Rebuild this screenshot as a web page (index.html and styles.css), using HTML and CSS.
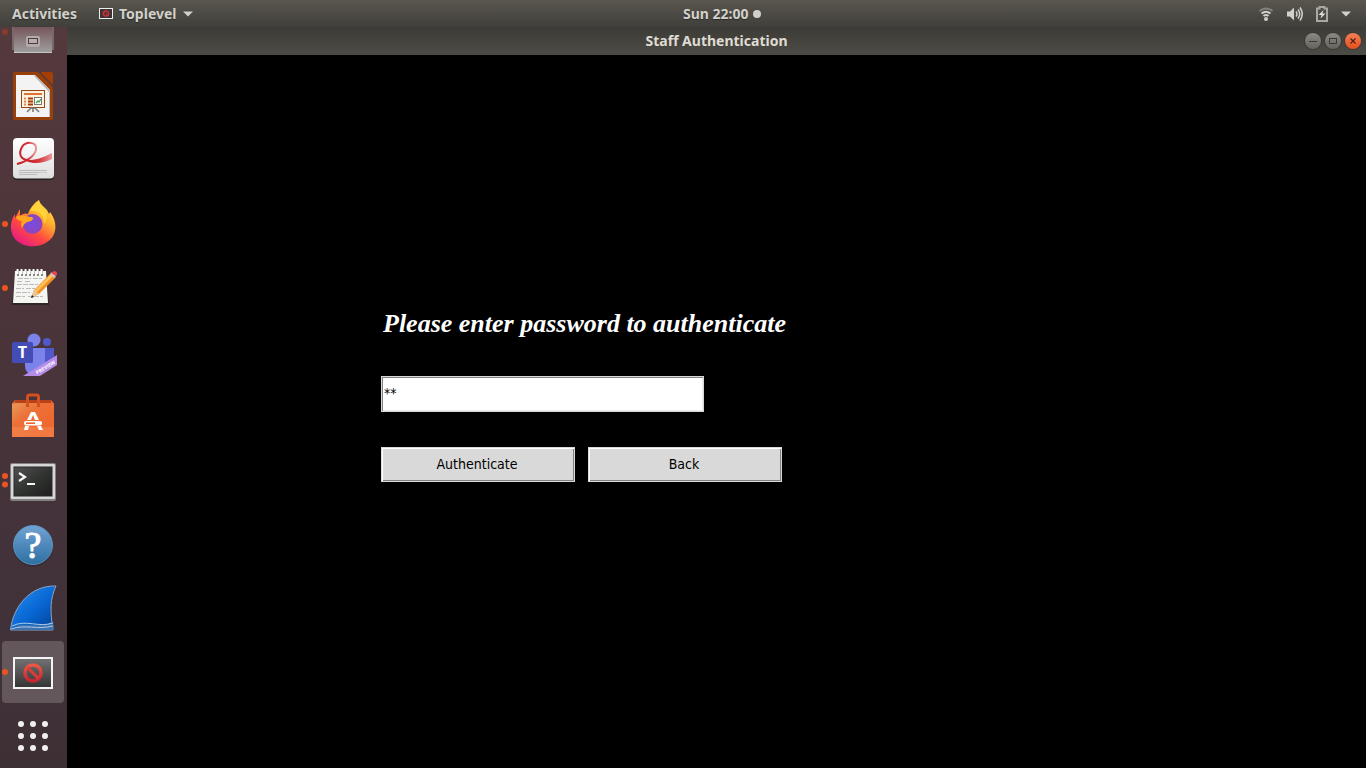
FILE: index.html
```html
<!DOCTYPE html>
<html lang="en">
<head>
<meta charset="utf-8">
<title>Staff Authentication</title>
<link rel="stylesheet" href="styles.css">
</head>
<body>
<div class="desktop">
  <header class="topbar">
    <div class="topbar-left">
      <button class="bar-button" type="button">Activities</button>
      <button class="bar-button app-menu" type="button">
        <svg width="14" height="11" viewBox="0 0 14 11"><rect x=".5" y=".5" width="13" height="10" fill="#3a3434" stroke="#eee"/><circle cx="7" cy="5.500" r="2.600" fill="none" stroke="#d5303a" stroke-width="1.400"/><path d="M5 3.500l4 4" stroke="#d5303a"/></svg>
        <span>Toplevel</span>
        <svg width="10" height="6" viewBox="0 0 10 6"><path d="M0 .5h10L5 5.500z" fill="#d2d0cb"/></svg>
      </button>
    </div>
    <div class="topbar-right">
      <button class="bar-button clock" type="button"><span>Sun 22:00</span><span class="clock-dot"></span></button>
      <button class="bar-button tray" type="button" aria-label="System menu">
        <svg width="16" height="16" viewBox="0 0 16 16" fill="none" stroke-width="2"><path d="M1.500 5Q8 0 14.500 5" stroke="#85827b"/><path d="M3.500 7.500Q8 4 12.500 7.500M5.500 10Q8 8 10.500 10" stroke="#d2d0cb"/><circle cx="8" cy="13" r="2" fill="#d2d0cb"/></svg>
        <svg width="16" height="16" viewBox="0 0 16 16" fill="none" stroke="#d2d0cb" stroke-width="1.500"><path d="M0 5.500h3l4-4v13l-4-4H0z" fill="#d2d0cb" stroke="none"/><path d="M9 5.500q2 2.500 0 5M11 3.500q3.500 4.500 0 9M13 1.500q4.500 6.500 0 13"/></svg>
        <svg width="12" height="16" viewBox="0 0 12 16"><path d="M1 2.500h2.500V1h5v1.500H11V15H1z" fill="none" stroke="#aaa8a2" stroke-width="2"/><path d="M7.500 4L2.500 9h3L4.500 12.500l5-5h-3z" fill="#e0deda"/></svg>
        <svg width="10" height="6" viewBox="0 0 10 6"><path d="M0 .5h10L5 5.500z" fill="#d2d0cb"/></svg>
      </button>
    </div>
  </header>

  <div class="workspace">
    <nav class="dock" aria-label="Dock">
      <button class="dock-item" type="button" aria-label="Disk">
        <svg viewBox="0 0 67 64"><defs><linearGradient id="disk" x2="0" y2="1"><stop offset=".2" stop-color="#75555a"/><stop offset="1" stop-color="#a0a0a0"/></linearGradient></defs><circle cx="5" cy="32" r="3" fill="#873c2f"/><path d="M12 20h42v30H12z" fill="#77696b"/><path d="M14 20h38v33H14z" fill="url(#disk)"/><path d="M14 52.500h38" stroke="#c4c4c4"/><rect x="26" y="36" width="14" height="11" rx="2" fill="#b5a9aa"/><rect x="28.500" y="38.500" width="9" height="5" fill="#b8acad" stroke="#493e40"/></svg>
      </button>
      <button class="dock-item" type="button" aria-label="LibreOffice Impress">
        <svg viewBox="0 0 67 64"><path d="M15 8h21q2 0 3 1l13 13q1 1 1 3v29q0 2-2 2H15q-2 0-2-2V10q0-2 2-2z" fill="#98400a"/><path d="M41 8h10q2 0 2 2v10q-1 0-2-1L42 10q-1-1-1-2z" fill="#a53e00"/><path d="M16 11h19l15 15v27H16z" fill="#f3f3f3"/><path d="M35 11l15 15v27h-1V28L34 12z" fill="#bbb"/><rect x="21.500" y="26.500" width="23" height="17" fill="#fff1df" stroke="#9b4514"/><path d="M24 30h18" stroke="#dd7434" stroke-width="2"/><path d="M24 34.500h2m-2 3h2m-2 3h2" stroke="#e38a52" stroke-width="2"/><path d="M28 34.500h5m-5 3h5m-5 3h5" stroke="#a53e00" stroke-width="2"/><rect x="34.500" y="33.500" width="7" height="7" fill="#fff" stroke="#777"/><path d="M36 39l2-2 1 1 2-3" stroke="#38a648" fill="none" stroke-width="1.300"/><path d="M27 48l4-4h4l4 4M33 44v4" fill="none" stroke="#777" stroke-width="1.500"/></svg>
      </button>
      <button class="dock-item" type="button" aria-label="Document Viewer">
        <svg viewBox="0 0 67 64"><defs><linearGradient id="pdf" x2="0" y2="1"><stop stop-color="#fff"/><stop offset="1" stop-color="#dedede"/></linearGradient><linearGradient id="red"><stop stop-color="#c51820"/><stop offset=".6" stop-color="#d4383c"/><stop offset="1" stop-color="#e8999a"/></linearGradient></defs><rect x="13" y="11" width="41" height="41" rx="4" fill="#272022"/><rect x="13" y="10" width="41" height="40.500" rx="4" fill="url(#pdf)"/><path d="M17 36c12-3 20-10 19-17-1-5-10-6-14 0-4 7-1 13 6 13" fill="none" stroke="url(#red)" stroke-width="2"/><path d="M21 27c5 9 20 4 31-2v6c-12 6-27 6-31-4z" fill="url(#red)"/><path d="M19 42.500h28M19 44.500h20M19 46.500h18" stroke="#bbb"/><path d="M39 44.500h8" stroke="#ccc"/></svg>
      </button>
      <button class="dock-item" type="button" aria-label="Firefox">
        <svg viewBox="0 0 67 64"><defs><linearGradient id="fox" x1=".9" x2=".2" y2="1"><stop stop-color="#fff04a"/><stop offset=".35" stop-color="#ffb02b"/><stop offset=".65" stop-color="#ff4b40"/><stop offset="1" stop-color="#e5168b"/></linearGradient><radialGradient id="globe"><stop stop-color="#754ce5"/><stop offset="1" stop-color="#9045b8"/></radialGradient></defs><circle cx="5" cy="32" r="3" fill="#e95420"/><path d="M39 8c1 4 4 6 8 10l2 4 1-2c9 12 6 25-3 30-10 7-25 5-32-3-6-8-5-18 0-25v4l5-9v7c3-3 6-3 8-2 2-6 6-11 11-14z" fill="url(#fox)"/><circle cx="32.500" cy="32" r="10" fill="url(#globe)"/><path d="M16 25c4-3 10-1 14 0 4 0 4 2 1 4-5 1-8 3-8 7-3-2-2-5-1-7-3 0-6-2-6-4z" fill="#ffa51e"/><path d="M30 19c9-2 15 5 14 13 6-7 1-16-6-21-4 2-7 5-8 8z" fill="#ffd43b"/></svg>
      </button>
      <button class="dock-item" type="button" aria-label="Text Editor">
        <svg viewBox="0 0 67 64"><circle cx="5" cy="32" r="3" fill="#e95420"/><path d="M15 16h31l3 33H12z" fill="#2d2728"/><path d="M15 15h31l2 32H13z" fill="#f5f5f1"/><path d="M18 14v6m4-6v6m4-6v6m4-6v6m4-6v6m4-6v6m4-6v6" stroke="#888" stroke-width="2"/><path d="M17.500 13v5m4-5v5m4-5v5m4-5v5m4-5v5m4-5v5m4-5v5" stroke="#fff" stroke-width="2"/><path d="M18 22.500h13m2 0h9m-25 3h6m2 0h6m-14 3h21m-22 4h8m2 0h9m-19 4h14m-14 4h9m3 0h15" stroke="#bbb" stroke-dasharray="5 1"/><path d="M31 42l3-8 17-17 5 4-17 17z" fill="#f29121"/><path d="M34 35l17-17 2 2-17 17z" fill="#ffc15a"/><path d="M31 42l3-8 5 4z" fill="#e8c797"/><path d="M31 42l1-3 2 2z" fill="#222"/><path d="M50 18l2-2 4 4-2 2z" fill="#c6c6c6"/><path d="M51 17l3-2c3 0 4 3 2 5z" fill="#e94454"/></svg>
      </button>
      <button class="dock-item" type="button" aria-label="Teams Preview">
        <svg viewBox="0 0 67 64"><circle cx="34" cy="20" r="6.500" fill="#7b83eb"/><circle cx="47" cy="22" r="4" fill="#5059c9"/><path d="M40 28h14v13q-2 9-14 9z" fill="#5059c9"/><path d="M25 28h20v18q-4 10-13 8-7-1-7-8z" fill="#7b83eb"/><rect x="12" y="22" width="21" height="21" rx="1.500" fill="#444cb5"/><path d="M23 56l34-21v10L40 56z" fill="#b68be7"/><text x="22.500" y="38" class="teams-letter">T</text><text class="preview-label" transform="translate(37 54.500) rotate(-31)">PREVIEW</text></svg>
      </button>
      <button class="dock-item" type="button" aria-label="Ubuntu Software">
        <svg viewBox="0 0 67 64"><defs><linearGradient id="bag" x2="1" y2="1"><stop stop-color="#e89a58"/><stop offset=".35" stop-color="#ed7038"/><stop offset="1" stop-color="#ed6528"/></linearGradient></defs><path d="M15 16h36l3 4H12z" fill="#b84217"/><path d="M12 19h42v34H12z" fill="url(#bag)"/><path d="M12 43h42v10H12z" fill="#f38650" fill-opacity=".6"/><path d="M27.500 23V13q0-2 2-2h7q2 0 2 2v10" fill="none" stroke="#d4501f" stroke-width="3"/><path d="M12 20l3-4v4m39 0l-3-4v4" fill="#e56b35"/><path d="M31 28h4l4 8h-4l-2-5-2 5h-4zM25 42h4l-1 4h-4zM37 42h4l2 4h-4z" fill="#fff"/><rect x="24" y="37" width="18" height="4.500" rx="2" fill="#fff"/><path d="M26 39.200h9" stroke="#ed5b20" stroke-width="1.500"/></svg>
      </button>
      <button class="dock-item" type="button" aria-label="Terminal">
        <svg viewBox="0 0 67 64"><defs><linearGradient id="term" x2="1" y2="1"><stop stop-color="#505150"/><stop offset=".5" stop-color="#323432"/><stop offset="1" stop-color="#1c1d1c"/></linearGradient></defs><circle cx="5" cy="28" r="3" fill="#e95420"/><circle cx="5" cy="36.500" r="3" fill="#e95420"/><rect x="10" y="15" width="46" height="38" rx="2" fill="#818181"/><rect x="11" y="16" width="44" height="35" rx="1" fill="#d6d6d6"/><rect x="14" y="19" width="38" height="29" fill="url(#term)" stroke="#292a29"/><path d="M19 25l6 4-6 4M27 36h8" fill="none" stroke="#f4f4f4" stroke-width="2.200"/></svg>
      </button>
      <button class="dock-item" type="button" aria-label="Help">
        <svg viewBox="0 0 67 64"><defs><linearGradient id="help" x2="0" y2="1"><stop stop-color="#71a3d4"/><stop offset="1" stop-color="#2d6fa2"/></linearGradient></defs><circle cx="33" cy="34.500" r="20" fill="#342b32"/><circle cx="33" cy="33" r="19.500" fill="url(#help)" stroke="#5b91bb"/><text x="33" y="46" class="help-mark">?</text></svg>
      </button>
      <button class="dock-item" type="button" aria-label="Wireshark">
        <svg viewBox="0 0 67 64"><defs><linearGradient id="fin" x2="1" y2="1"><stop offset=".1" stop-color="#2389ee"/><stop offset=".55" stop-color="#0866d2"/><stop offset="1" stop-color="#043e91"/></linearGradient></defs><path d="M10.500 54C13 31 30 9 56 10c-6 13-6 25-3 44z" fill="url(#fin)" stroke="#8ca4c2"/><path d="M11 53c14-10 24 2 42-8l1 9H11z" fill="#3d72af"/><path d="M12 50c14-7 26 2 41-3M11 53c15-5 26 1 42-3" stroke="#a9cae8" fill="none"/></svg>
      </button>
      <button class="dock-item" type="button" aria-label="Toplevel">
        <svg viewBox="0 0 67 64"><defs><linearGradient id="top" x2="0" y2="1"><stop stop-color="#737373"/><stop offset="1" stop-color="#333"/></linearGradient><linearGradient id="stop" x2="0" y2="1"><stop stop-color="#ee5746"/><stop offset="1" stop-color="#c6232e"/></linearGradient></defs><rect x="2" y="1" width="62" height="62" rx="4" fill="#64575c"/><circle cx="5" cy="32" r="3" fill="#e95420"/><rect x="14" y="18" width="38" height="30" fill="url(#top)" stroke="#f4f4f4" stroke-width="2"/><circle cx="33" cy="33" r="8" fill="none" stroke="url(#stop)" stroke-width="3.500"/><path d="M27.500 27.500l11 11" stroke="#dc3b38" stroke-width="3"/></svg>
      </button>
      <button class="dock-item" type="button" aria-label="Show Applications">
        <svg viewBox="0 0 67 64" fill="#f2f0ef"><circle cx="21" cy="20" r="3"/><circle cx="33" cy="20" r="3"/><circle cx="45" cy="20" r="3"/><circle cx="21" cy="32" r="3"/><circle cx="33" cy="32" r="3"/><circle cx="45" cy="32" r="3"/><circle cx="21" cy="44" r="3"/><circle cx="33" cy="44" r="3"/><circle cx="45" cy="44" r="3"/></svg>
      </button>
    </nav>

    <main class="window">
      <div class="titlebar">
        <h1 class="window-title">Staff Authentication</h1>
        <div class="window-controls">
          <button class="control" type="button" aria-label="Minimize"><svg width="16" height="16" viewBox="0 0 16 16"><path d="M4 8.500h8" stroke="#3a3934"/></svg></button>
          <button class="control" type="button" aria-label="Maximize"><svg width="16" height="16" viewBox="0 0 16 16"><rect x="4.500" y="5.500" width="7" height="5" fill="none" stroke="#3a3934"/></svg></button>
          <button class="control control-close" type="button" aria-label="Close"><svg width="16" height="16" viewBox="0 0 16 16"><path d="M5.500 5.500l5 5m0-5l-5 5" stroke="#54200f" stroke-width="1.200"/></svg></button>
        </div>
      </div>
      <form class="auth-form">
        <label class="prompt" for="password">Please enter password to authenticate</label>
        <input class="password" id="password" type="text" value="**" autocomplete="off">
        <div class="actions">
          <button class="action" type="button">Authenticate</button>
          <button class="action" type="button">Back</button>
        </div>
      </form>
    </main>
  </div>
</div>
</body>
</html>
```
FILE: styles.css
```css
* {
  box-sizing: border-box;
}

body {
  margin: 0;
  background: #000;
  font-family: "Noto Sans", "Open Sans", sans-serif;
}

button {
  font: inherit;
  color: inherit;
}

svg {
  display: block;
  flex: none;
}

.desktop {
  display: flex;
  flex-direction: column;
  height: 100vh;
}

.topbar {
  display: grid;
  grid-template-columns: 1fr 1fr;
  align-items: center;
  height: 27px;
  padding: 0 12px;
  background: linear-gradient(#59564e, #403f3a);
  color: #d2d0cb;
  font-size: 14px;
  font-weight: 700;
  line-height: 20px;
}

.topbar-left {
  display: flex;
  gap: 22px;
}

.topbar-right {
  display: flex;
  align-items: center;
  justify-content: space-between;
  padding-right: 3px;
}

.bar-button {
  display: flex;
  align-items: center;
  padding: 0;
  border: 0;
  background: none;
  text-shadow: 0 1px 1px #2b2a27;
}

.app-menu {
  gap: 6px;
}

.clock {
  gap: 4px;
}

.clock-dot {
  width: 8px;
  height: 8px;
  border-radius: 50%;
  background: #d2d0cb;
}

.tray {
  gap: 13px;
}

.workspace {
  display: flex;
  flex: 1;
  min-height: 0;
}

.dock {
  display: flex;
  flex: none;
  flex-direction: column;
  justify-content: flex-end;
  width: 67px;
  overflow: hidden;
  background: linear-gradient(#54393d, #49343a 45%, #42323a 75%, #3d3035);
}

.dock-item {
  flex: none;
  height: 64px;
  padding: 0;
  border: 0;
  background: none;
}

.dock-item svg {
  width: 67px;
  height: 64px;
}

.teams-letter {
  fill: #fff;
  font: bold 16px "Open Sans", sans-serif;
  text-anchor: middle;
}

.preview-label {
  fill: #fff;
  font: bold 5px "Open Sans", sans-serif;
}

.help-mark {
  fill: #fff;
  stroke: #fff;
  font: 38px "Liberation Serif", serif;
  text-anchor: middle;
}

.window {
  display: flex;
  flex: 1;
  flex-direction: column;
  min-width: 0;
  background: #000;
}

.titlebar {
  display: grid;
  grid-template-columns: 1fr auto 1fr;
  align-items: center;
  height: 28px;
  padding: 0 5px;
  background: linear-gradient(#3c3b37, #4d4b45);
}

.window-title {
  grid-column: 2;
  margin: 0;
  color: #dfdbd2;
  font-size: 14px;
  font-weight: 700;
  line-height: 20px;
}

.window-controls {
  display: flex;
  justify-self: end;
  gap: 4px;
}

.control {
  width: 16px;
  height: 16px;
  padding: 0;
  border: 0;
  border-radius: 50%;
  background: linear-gradient(#8b8880, #65635c);
  box-shadow: 0 0 0 1px #393833;
}

.control-close {
  background: linear-gradient(#f37f59, #e6501d);
}

.auth-form {
  display: flex;
  flex-direction: column;
  align-items: flex-start;
  padding: 253px 24px 24px 314px;
}

.prompt {
  padding: 0 2px;
  color: #fff;
  font: italic bold 26px/32px "Liberation Serif", serif;
}

.password {
  width: 323px;
  height: 36px;
  margin-top: 36px;
  padding: 0 2px 2px;
  border: 1px solid #d9d9d9;
  outline: 0;
  background: #fff;
  box-shadow: inset 1px 1px #828282, inset -1px -1px #ececec;
  color: #000;
  font: 14px/20px "DejaVu Sans Condensed", "DejaVu Sans", sans-serif;
}

.actions {
  display: flex;
  gap: 13px;
  margin-top: 35px;
}

.action {
  width: 194px;
  height: 35px;
  padding: 0 2px 2px 0;
  border: 1px solid #d9d9d9;
  background: #d9d9d9;
  box-shadow: inset 1px 1px #fff, inset -1px -1px #828282;
  color: #000;
  font: 14px/20px "DejaVu Sans Condensed", "DejaVu Sans", sans-serif;
}
```
